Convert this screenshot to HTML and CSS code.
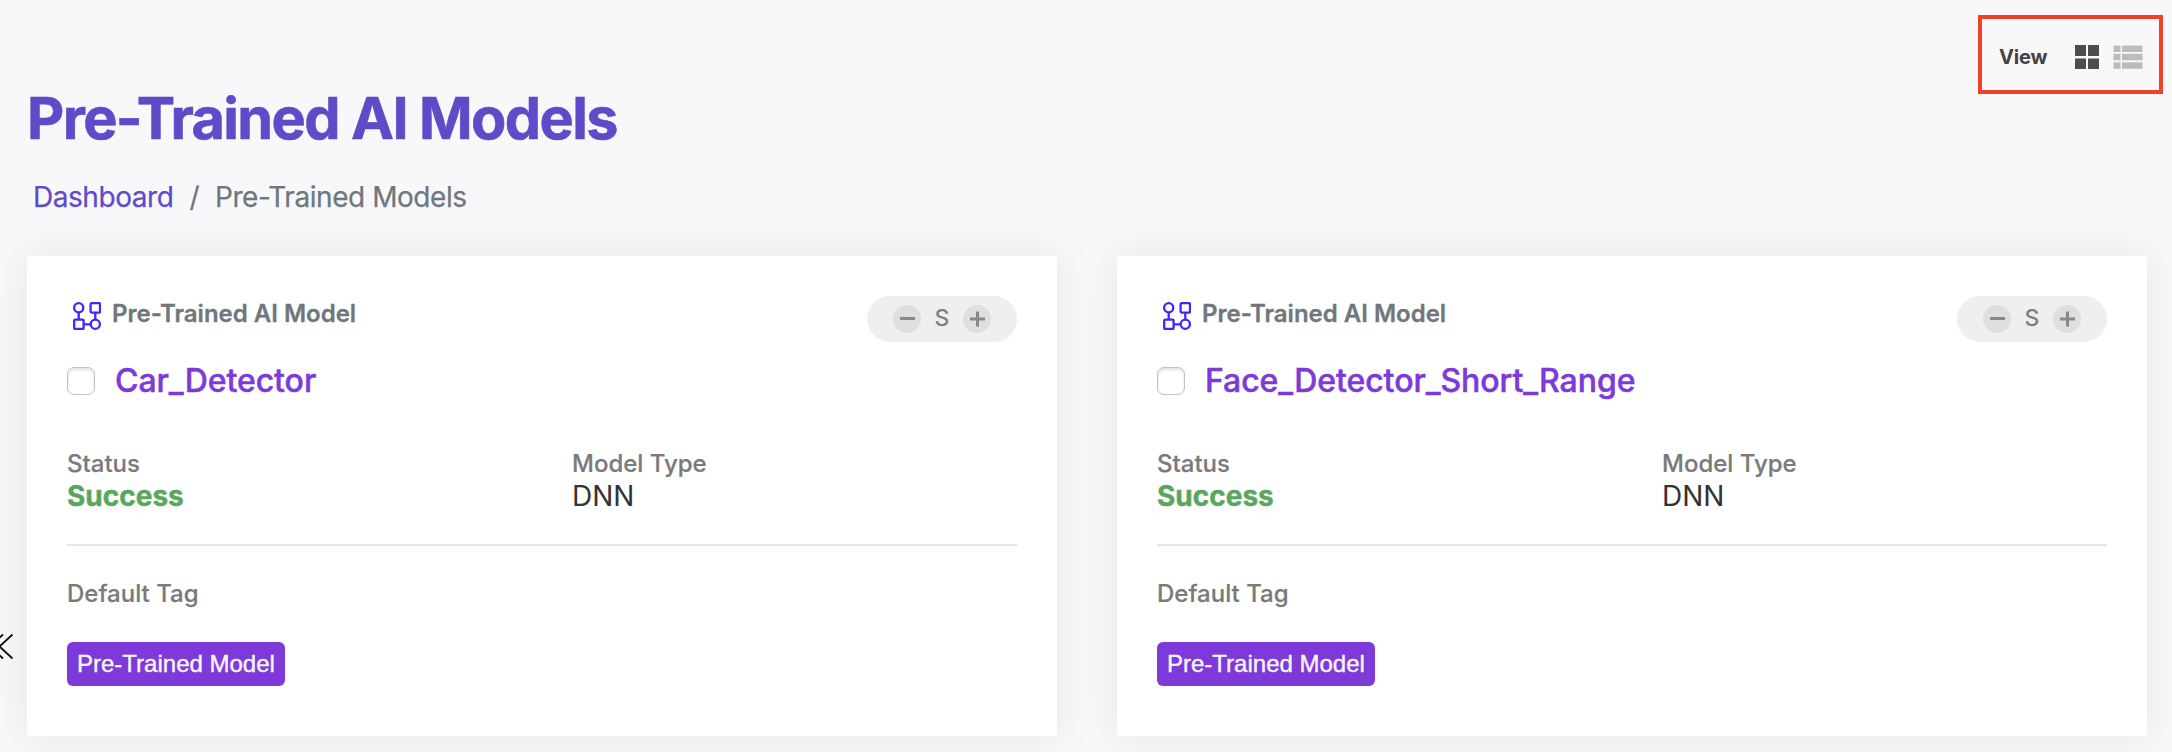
FILE: index.html
```html
<!DOCTYPE html>
<html lang="en">
<head>
<meta charset="utf-8">
<title>Pre-Trained AI Models</title>
<link rel="stylesheet" href="styles.css">
</head>
<body>
<svg class="sprite" aria-hidden="true">
  <symbol id="flow" viewBox="0 0 28 28">
    <g fill="none" stroke="#3d29f5" stroke-width="2.300">
      <circle cx="5.7" cy="5.8" r="4.600"/>
      <rect x="17.6" y="1.200" width="9.4" height="9.4" rx="1"/>
      <rect x="1.200" y="17.6" width="9.4" height="9.4" rx="1"/>
      <circle cx="22.3" cy="22.2" r="4.600"/>
      <path d="M5.7 10.5v7.1M22.3 10.4v7.1M10.4 22.3h7.2"/>
    </g>
  </symbol>
</svg>
<header class="topbar">
  <div class="view">
    <span class="view-label">View</span>
    <svg class="icon-grid" width="24" height="24" viewBox="0 0 24 24"><path fill="#4d4d4d" d="M0 0h11v11H0zM13 0h11v11H13zM0 13.5h11V24H0zM13 13.5h11V24H13z"/></svg>
    <svg class="icon-list" width="30" height="24" viewBox="0 0 30 24"><path fill="#bcbcbc" d="M.5.5h7v6.500h-7zM9 .5h20.500v6.500H9zM.5 8.800h7v6.500h-7zM9 8.800h20.500v6.500H9zM.5 17.200h7v6.500h-7zM9 17.200h20.500v6.500H9z"/></svg>
  </div>
</header>
<h1 class="title">Pre-Trained AI Models</h1>
<nav class="crumbs"><a class="crumb-link">Dashboard</a><span class="crumb-sep">/</span><span class="crumb-here">Pre-Trained Models</span></nav>
<main class="cards">
  <article class="card">
    <div class="card-head">
      <svg class="flow" width="28" height="28"><use href="#flow"/></svg>
      <span class="kind">Pre-Trained AI Model</span>
      <div class="size">
        <span class="round"><svg width="28" height="28"><path d="M7 13.500h15" stroke="#888" stroke-width="3"/></svg></span>
        <span class="size-value">S</span>
        <span class="round"><svg width="28" height="28"><path d="M7 14h15M14.500 6.500v15" stroke="#888" stroke-width="3"/></svg></span>
      </div>
    </div>
    <div class="name-row"><span class="check"></span><a class="name">Car_Detector</a></div>
    <dl class="facts">
      <div><dt class="label">Status</dt><dd class="value success">Success</dd></div>
      <div><dt class="label">Model Type</dt><dd class="value">DNN</dd></div>
    </dl>
    <div class="label label-tag">Default Tag</div>
    <span class="tag">Pre-Trained Model</span>
  </article>
  <article class="card">
    <div class="card-head">
      <svg class="flow" width="28" height="28"><use href="#flow"/></svg>
      <span class="kind">Pre-Trained AI Model</span>
      <div class="size">
        <span class="round"><svg width="28" height="28"><path d="M7 13.500h15" stroke="#888" stroke-width="3"/></svg></span>
        <span class="size-value">S</span>
        <span class="round"><svg width="28" height="28"><path d="M7 14h15M14.500 6.500v15" stroke="#888" stroke-width="3"/></svg></span>
      </div>
    </div>
    <div class="name-row"><span class="check"></span><a class="name">Face_Detector_Short_Range</a></div>
    <dl class="facts">
      <div><dt class="label">Status</dt><dd class="value success">Success</dd></div>
      <div><dt class="label">Model Type</dt><dd class="value">DNN</dd></div>
    </dl>
    <div class="label label-tag">Default Tag</div>
    <span class="tag">Pre-Trained Model</span>
  </article>
</main>
<svg class="collapse" width="14" height="28" viewBox="0 0 14 28"><path d="M12.500 1.500L-.5 13.500l13 12M3 1.500l-13 12 13 12" fill="none" stroke="#111" stroke-width="1.800"/></svg>
</body>
</html>
```
FILE: styles.css
```css
* { box-sizing: border-box; }
body {
  margin: 0;
  height: 752px;
  overflow: hidden;
  background: #f8f8fb;
  font-family: Inter, "Liberation Sans", sans-serif;
}
.sprite { position: absolute; width: 0; height: 0; }
.topbar { display: flex; justify-content: flex-end; padding: 15px 9px 0 0; height: 82px; }
.view {
  display: flex;
  align-items: center;
  flex: none;
  width: 185px;
  height: 79px;
  padding: 0 16px 0 17px;
  border: 4px solid #ed4226;
}
.view-label { flex: 1; font-size: 20px; font-weight: 700; line-height: 24px; letter-spacing: -.2px; color: #434343; padding-top: 5px; }
.icon-grid { margin: 4px 14px 0 0; }
.icon-list { margin-top: 4px; }
.title {
  margin: 0;
  padding-left: 27px;
  height: 73px;
  line-height: 72px;
  font-size: 57.600px;
  font-weight: 700;
  letter-spacing: -1.600px;
  color: #5e4bc8;
  -webkit-text-stroke: .6px #5e4bc8;
  white-space: nowrap;
}
.crumbs { display: flex; height: 101px; padding: 25px 0 0 33px; font-size: 28px; line-height: 34px; letter-spacing: -.45px; color: #6f777e; -webkit-text-stroke: .25px; }
.crumb-link { color: #5e4bc8; }
.crumb-sep { padding: 0 16px; }
.cards { display: grid; grid-template-columns: 1030px 1030px; gap: 60px; padding-left: 27px; }
.card { height: 480px; padding: 40px; background: #fff; box-shadow: 0 0 40px rgba(0, 0, 0, .08); }
.card-head { display: flex; height: 46px; }
.flow { margin: 6px 11px 0 6px; }
.kind { font-size: 24px; font-weight: 600; line-height: 30px; padding-top: 3px; color: #6f777e; flex: 1; -webkit-text-stroke: .3px; }
.size { display: flex; align-items: center; justify-content: center; width: 150px; height: 46px; border-radius: 23px; background: #efefef; }
.round { width: 28px; height: 28px; border-radius: 50%; background: #dfdfdf; }
.round svg { display: block; }
.size-value { width: 42px; text-align: center; font-size: 23px; font-weight: 500; color: #808080; line-height: 28px; padding-bottom: 2px; }
.name-row { display: flex; align-items: center; height: 40px; margin-top: 19px; gap: 20px; }
.check { width: 28px; height: 28px; border: 1px solid #c2c2c2; border-radius: 7px; box-shadow: inset 0 2px 3px rgba(0, 0, 0, .12); }
.name { font-size: 32px; font-weight: 500; letter-spacing: -.06px; color: #7e3ad8; line-height: 40px; -webkit-text-stroke: .5px; }
.facts { display: grid; grid-template-columns: 505px 1fr; margin: 48px 0 0; height: 97px; border-bottom: 2px solid #e6e6e6; }
.label { font-size: 24px; font-weight: 500; line-height: 30px; color: #7a7a7a; -webkit-text-stroke: .2px; }
.value { margin: -1px 0 0; font-size: 28px; line-height: 36px; color: #333; }
.success { font-weight: 700; color: #5aa65e; -webkit-text-stroke: .4px; }
.label-tag { margin-top: 33px; }
.tag { display: block; width: 218px; height: 44px; margin-top: 33px; border-radius: 6px; background: #7e3ad8; color: #f8f4fe; font-family: "Liberation Sans", sans-serif; font-size: 24px; line-height: 44px; padding-left: 10px; white-space: nowrap; -webkit-text-stroke: .4px; }
.collapse { position: absolute; left: 0; top: 633px; }
```
